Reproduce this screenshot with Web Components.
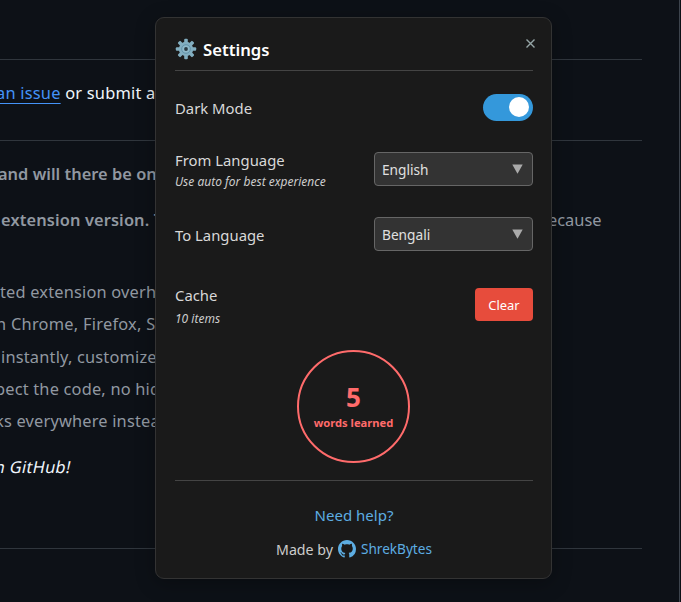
<!DOCTYPE html>
<html lang="en"><head><meta charset="utf-8"><title>Settings</title>
<style>
html,body{margin:0;height:602px;overflow:hidden;background:#0d1117;font-family:"Noto Sans",sans-serif}
</style></head><body>
<app-page></app-page>
<script>
const define=(name,html)=>customElements.define(name,class extends HTMLElement{
  constructor(){super();this.attachShadow({mode:'open'}).innerHTML=html;}
});

define('doc-line',`<style>
:host{display:block;height:var(--h,32px);line-height:var(--h,32px);margin-left:var(--x,0);font-size:16.4px;letter-spacing:var(--s,.18px);color:#9198a1;white-space:nowrap}
:host([bright]){color:#f0f6fc}
:host([bold]){font-weight:600;--s:.12px}
:host([slanted]){transform:skewX(-12deg)}
::slotted(a){color:#4493f8;text-decoration:underline;text-underline-offset:4px;text-decoration-thickness:1px}
</style><slot></slot>`);

define('doc-rule',`<style>:host{display:block;height:1px;width:642px;background:#30363d}</style>`);

define('doc-background',`<style>
:host{display:block;box-sizing:border-box;width:680px;height:602px;border-right:1px solid #3d444d;padding-top:59px;overflow:hidden}
.a{padding:17px 0 31px}.b{padding:17px 0 65px}
.pair{display:flex;justify-content:space-between;width:601.5px}
.gap{height:14px}
</style>
<doc-rule></doc-rule>
<div class="a"><doc-line bright style="--x:-4px;--s:.22px"><a>an issue</a> or submit a pull</doc-line></div>
<doc-rule></doc-rule>
<div class="b"><doc-line bold style="--x:-2px;--s:.02px">and will there be one</doc-line>
<div class="gap"></div>
<div class="pair"><doc-line bold style="--x:1px">extension version. The</doc-line><doc-line style="--s:0px">because</doc-line></div>
<div style="height:40px"></div>
<doc-line style="--x:0px;--h:32.25px">ted extension overhaul</doc-line>
<doc-line style="--x:-4px;--h:32.25px;--s:.25px">n Chrome, Firefox, Safari</doc-line>
<doc-line style="--x:1px;--h:32.25px">instantly, customize</doc-line>
<doc-line style="--x:-5px;--h:32.25px">pect the code, no hidden</doc-line>
<doc-line style="--x:-5px;--h:32.25px">ks everywhere instead</doc-line>
<div class="gap"></div>
<doc-line bright slanted style="--x:-5px;--s:.3px">n GitHub!</doc-line></div>
<doc-rule></doc-rule>`);

define('gear-icon',`<style>:host{display:block;width:22px;height:22px}svg{display:block}</style>
<svg width="22" height="22" viewBox="-11 -11 22 22"><g fill="#82aec0">
<rect x="-1.8" y="-10.2" width="3.6" height="20.4" rx="1"/><rect x="-10.2" y="-1.8" width="20.4" height="3.6" rx="1"/>
<g transform="rotate(45)"><rect x="-1.8" y="-10.2" width="3.6" height="20.4" rx="1"/><rect x="-10.2" y="-1.8" width="20.4" height="3.6" rx="1"/></g>
<circle r="7.2"/></g><circle r="4.4" fill="none" stroke="#6596ad" stroke-width="1"/><circle r="3.3" fill="#8fbacb"/><circle r="1.9" fill="#2a3b44"/></svg>`);

define('card-header',`<style>
:host{display:flex;height:53px;box-sizing:border-box;border-bottom:1px solid #444;justify-content:space-between}
.t{display:flex;gap:6px;align-items:center;height:24px;margin-top:19px;color:#fff;font-size:16.7px;font-weight:600}
svg{display:block;margin:19.5px -3px 0 0}
</style><div class="t"><gear-icon></gear-icon><slot></slot></div>
<svg width="11" height="11" viewBox="0 0 11 11"><path d="M1.5 1.5l8 8M9.5 1.5l-8 8" stroke="#95a5a6" stroke-width="1.4"/></svg>`);

define('setting-row',`<style>
:host{display:flex;justify-content:space-between;align-items:center;height:var(--h);color:#d8d8d8;font-size:14.85px}
.t{padding-top:var(--d,3px)}
.l{display:block;line-height:20px}
.n{display:block;font-size:12px;font-style:italic;color:#ccc;line-height:18px;margin-top:var(--g,2px)}
</style><div class="t"><span class="l"><slot></slot></span><span class="n"><slot name="note"></slot></span></div><slot name="control"></slot>`);

define('toggle-switch',`<style>
:host{display:flex;justify-content:flex-end;box-sizing:border-box;width:50px;height:27px;border-radius:14px;background:#3498db;padding:3px 4px}
i{width:20px;height:20px;border-radius:50%;background:#fff}
</style><i></i>`);

define('select-box',`<style>
:host{display:flex;justify-content:space-between;align-items:center;box-sizing:border-box;width:159px;height:34px;border:1px solid #666;border-radius:4px;background:#333;padding:0 9px 0 7px;font-size:13.7px;color:#e0e0e0}
svg{display:block}
</style><span><slot></slot></span><svg width="11" height="10" viewBox="0 0 11 10"><path d="M.3.5h10.4L5.5 9.8z" fill="#aaa"/></svg>`);

define('clear-button',`<style>
:host{display:flex;align-items:center;justify-content:center;width:58px;height:33px;border-radius:4px;background:#e74c3c;color:#fff;font-size:12.9px}
</style><slot></slot>`);

define('word-counter',`<style>
:host{display:flex;flex-direction:column;align-items:center;box-sizing:border-box;width:113px;height:113px;margin:0 auto;border:2px solid #ff6b6b;border-radius:50%;color:#ff6b6b;font-weight:700;padding-top:28px}
.v{font-size:26px;line-height:34px}.c{font-size:11.2px;line-height:16px;white-space:nowrap;margin-top:1px}
</style><span class="v"><slot></slot></span><span class="c"><slot name="caption"></slot></span>`);

define('card-footer',`<style>
:host{display:flex;flex-direction:column;align-items:center;border-top:1px solid #444;margin-top:17px;padding-top:22px;font-size:15px;color:#ccc}
a{color:#5dade2;line-height:24px}.m{display:flex;align-items:center;height:24px;margin-top:10px;font-size:14.1px}
.m a{font-size:13.6px}.m span{font-size:14.2px}
svg{display:block;margin:0 5px}
</style><a>Need help?</a><div class="m"><span>Made by</span><svg width="18" height="18" viewBox="0 0 16 16"><path fill="#5dade2" d="M8 0C3.58 0 0 3.58 0 8c0 3.54 2.29 6.53 5.47 7.59.4.07.55-.17.55-.38 0-.19-.01-.82-.01-1.49-2.01.37-2.53-.49-2.69-.94-.09-.23-.48-.94-.82-1.13-.28-.15-.68-.52-.01-.53.63-.01 1.08.58 1.23.82.72 1.21 1.87.87 2.33.66.07-.52.28-.87.51-1.07-1.78-.2-3.64-.89-3.64-3.95 0-.87.31-1.59.82-2.15-.08-.2-.36-1.02.08-2.12 0 0 .67-.21 2.2.82.64-.18 1.32-.27 2-.27s1.36.09 2 .27c1.53-1.04 2.2-.82 2.2-.82.44 1.1.16 1.92.08 2.12.51.56.82 1.27.82 2.15 0 3.07-1.87 3.75-3.65 3.95.29.25.54.73.54 1.48 0 1.07-.01 1.93-.01 2.2 0 .21.15.46.55.38A8.01 8.01 0 0 0 16 8c0-4.42-3.58-8-8-8z"/></svg><a>ShrekBytes</a></div>`);

define('settings-card',`<style>
:host{display:block;box-sizing:border-box;width:397px;height:562px;border:1px solid #333;border-radius:9px;background:#1a1a1a;padding:0 18px 0 19px;box-shadow:0 4px 20px rgba(0,0,0,.3)}
word-counter{margin-left:122px}
</style>
<card-header>Settings</card-header>
<setting-row style="--h:73px">Dark Mode<toggle-switch slot="control"></toggle-switch></setting-row>
<setting-row style="--h:50px;--g:3px">From Language<span slot="note">Use auto for best experience</span><select-box slot="control">English</select-box></setting-row>
<setting-row style="--h:80px;--d:3px">To Language<select-box slot="control">Bengali</select-box></setting-row>
<setting-row style="--h:61px;--g:5px;--d:4px">Cache<span slot="note">10 items</span><clear-button slot="control">Clear</clear-button></setting-row>
<div style="height:15px"></div>
<word-counter>5<span slot="caption">words learned</span></word-counter>
<card-footer></card-footer>`);

define('app-page',`<style>
:host{display:block;position:relative;width:681px;height:602px;overflow:hidden}
settings-card{position:absolute;left:155px;top:17px}
</style><doc-background></doc-background><settings-card></settings-card>`);
</script></body></html>
